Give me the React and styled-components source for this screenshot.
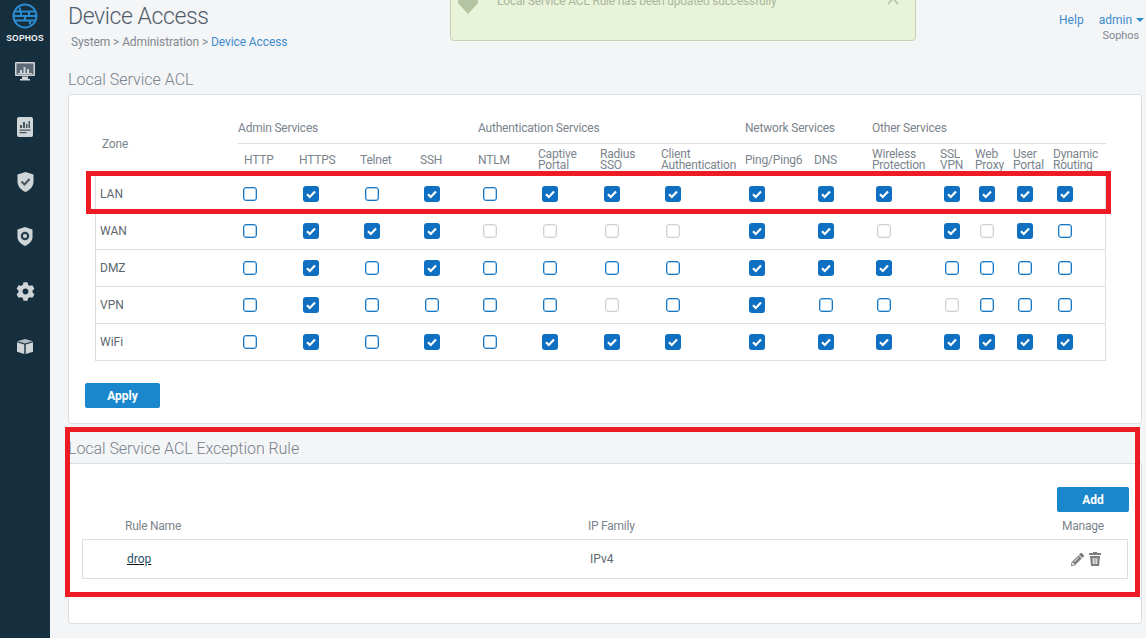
import styled, { createGlobalStyle } from "styled-components";
import { FaCog, FaPencilAlt } from "react-icons/fa";

const FONT = `Roboto, "Liberation Sans", sans-serif`;
const COLUMNS = "143px 61px 61px 60px 58px 60px 62px 61px 84px 69px 58px 68px 35px 38px 40px 53px";

const groups = [
    { name: "Admin Services", span: 4 },
    { name: "Authentication Services", span: 4 },
    { name: "Network Services", span: 2 },
    { name: "Other Services", span: 5 },
];

const services = [
    ["HTTP"], ["HTTPS"], ["Telnet"], ["SSH"], ["NTLM"],
    ["Captive", "Portal"], ["Radius", "SSO"], ["Client", "Authentication"],
    ["Ping/Ping6"], ["DNS"], ["Wireless", "Protection"],
    ["SSL", "VPN"], ["Web", "Proxy"], ["User", "Portal"], ["Dynamic", "Routing"],
];

// 1 = checked, 0 = empty, d = disabled
const zones = [
    { name: "LAN", values: "010101111111111" },
    { name: "WAN", values: "0111dddd11d1d10" },
    { name: "DMZ", values: "010100001110000" },
    { name: "VPN", values: "010000d0100d000" },
    { name: "WiFi", values: "010101111111111" },
];

export default function App() {
    return (
        <Page>
            <GlobalStyle />
            <Sidebar>
                <LogoMark />
                <LogoText>SOPHOS</LogoText>
                <NavIcon><MonitorIcon /></NavIcon>
                <NavIcon><ReportIcon /></NavIcon>
                <NavIcon><ShieldIcon /></NavIcon>
                <NavIcon><ShieldGearIcon /></NavIcon>
                <NavIcon><FaCog size={19} /></NavIcon>
                <NavIcon><BoxIcon /></NavIcon>
            </Sidebar>
            <Main>
                <Toast>
                    <ToastMark viewBox="0 0 20 14"><path d="M0 0h20v3L10 14 0 3z" /></ToastMark>
                    <ToastText>Local Service ACL Rule has been updated successfully</ToastText>
                    <ToastClose viewBox="0 0 12 9"><path d="M1-3l10 11M11-3L1 8" /></ToastClose>
                </Toast>
                <TopBar>
                    <div>
                        <PageTitle>Device Access</PageTitle>
                        <Crumbs>System &gt; Administration &gt; <CrumbLink>Device Access</CrumbLink></Crumbs>
                    </div>
                    <UserBox>
                        <UserLinks>
                            <TopLink>Help</TopLink>
                            <TopLink>admin <Caret /></TopLink>
                        </UserLinks>
                        <Company>Sophos</Company>
                    </UserBox>
                </TopBar>

                <SectionTitle>Local Service ACL</SectionTitle>
                <AclCard>
                    <AclTable>
                        <HeadRow>
                            <ZoneHead>Zone</ZoneHead>
                            {groups.map((g) => (
                                <GroupHead key={g.name} $span={g.span}>{g.name}</GroupHead>
                            ))}
                            {services.map((lines, i) => (
                                <ServiceHead key={lines[0]} $indent={i === 0}>
                                    {lines.map((l) => <span key={l}>{l}</span>)}
                                </ServiceHead>
                            ))}
                        </HeadRow>
                        {zones.map((zone) => (
                            <ZoneRow key={zone.name}>
                                <ZoneName>{zone.name}</ZoneName>
                                {zone.values.split("").map((v, i) => (
                                    <BoxCell key={i}><CheckBox value={v} /></BoxCell>
                                ))}
                            </ZoneRow>
                        ))}
                    </AclTable>
                    <PrimaryButton $width={75}>Apply</PrimaryButton>
                </AclCard>

                <ExceptionTitle>Local Service ACL Exception Rule</ExceptionTitle>
                <RuleCard>
                    <RuleActions>
                        <PrimaryButton $width={72}>Add</PrimaryButton>
                    </RuleActions>
                    <RuleHead>
                        <RuleHeadName>Rule Name</RuleHeadName>
                        <span>IP Family</span>
                        <span>Manage</span>
                    </RuleHead>
                    <RuleRow>
                        <RuleLink>drop</RuleLink>
                        <span>IPv4</span>
                        <RuleTools>
                            <FaPencilAlt size={13} />
                            <TrashIcon />
                        </RuleTools>
                    </RuleRow>
                </RuleCard>
            </Main>
            <Callout $x={86} $y={171} $w={1025} $h={43} />
            <Callout $x={65} $y={427} $w={1075} $h={170} />
        </Page>
    );
}

function CheckBox({ value }) {
    if (value === "1") {
        return (
            <Checked viewBox="0 0 16 16">
                <path d="M4 8.2l2.8 2.8L12 5.6" />
            </Checked>
        );
    }
    return <Unchecked $disabled={value === "d"} />;
}

function LogoMark() {
    return (
        <LogoSvg viewBox="0 0 26 26">
            <circle cx="13" cy="13" r="11.5" />
            <path d="M3 8.5h20M1.5 13h23M3 17.5h20M9 8.5V13M17 8.5V13M13 13v4.5M8 4.5v4M18 17.5v4" />
        </LogoSvg>
    );
}

function MonitorIcon() {
    return (
        <IconSvg $w={20} $h={19} viewBox="0 0 20 19">
            <rect width="20" height="14" rx="1" />
            <rect x="1.500" y="1.500" width="17" height="11" fill="#5b6a74" />
            <path d="M3 11h14v1H3zM5 8h2v3H5zM8.500 5h2v6h-2zM12 7h2v4h-2z" />
            <path d="M7 14.500h6V17h2v1.500H5V17h2z" />
        </IconSvg>
    );
}

function ReportIcon() {
    return (
        <IconSvg $w={16} $h={20} viewBox="0 0 16 20">
            <rect width="16" height="20" rx="2" />
            <path fill="#46565f" d="M3 8h2v3H3zM6 5h2v6H6zM9 7h1.500v4H9zM11.500 4H13v7h-1.500zM2.500 12.500h11v1.200h-11zM2.500 15h7v1.200h-7z" />
        </IconSvg>
    );
}

function ShieldIcon() {
    return (
        <IconSvg $w={17} $h={20} viewBox="0 0 17 20">
            <path d="M8.500 0l8 2.500v7c0 5-3.500 8.500-8 10.500-4.500-2-8-5.500-8-10.500v-7z" />
            <path d="M4.500 9.500l3 3 5-5.500" fill="none" stroke="#46565f" strokeWidth="2" />
        </IconSvg>
    );
}

function ShieldGearIcon() {
    return (
        <IconSvg $w={16} $h={19} viewBox="0 0 17 20">
            <path d="M8.500 0l8 2.500v8c0 4-3.500 7.500-8 9.500-4.500-2-8-5.500-8-9.500v-8z" />
            <circle cx="8.500" cy="9.500" r="4.500" fill="#24404f" />
            <circle cx="8.500" cy="9.500" r="2.200" />
        </IconSvg>
    );
}

function BoxIcon() {
    return (
        <IconSvg $w={16} $h={15} viewBox="0 0 16 15">
            <path d="M8 0l8 2.300L8 4.600 0 2.300z" opacity=".85" />
            <path d="M0 3.300l7.300 2.200V15L0 12.700zM16 3.300L8.700 5.500V15l7.300-2.300z" />
        </IconSvg>
    );
}

function TrashIcon() {
    return (
        <TrashSvg viewBox="0 0 12 14">
            <path d="M4 0h4v1h4v2H0V1h4z" />
            <path d="M1 4h10l-1 10H2z" />
            <path d="M4 6l.4 6M6 6v6M8 6l-.4 6" stroke="#fff" strokeWidth="1" fill="none" />
        </TrashSvg>
    );
}

const GlobalStyle = createGlobalStyle`
  html, body {
    margin: 0;
    height: 100%;
    background: #f4f5f7;
    font-family: ${FONT};
  }
  * { box-sizing: border-box; }
`;

const Page = styled.div`
  position: relative;
  display: flex;
  width: 1146px;
  height: 638px;
  overflow: hidden;
  background: #f4f5f7;
`;

const Sidebar = styled.nav`
  flex: 0 0 50px;
  display: flex;
  flex-direction: column;
  align-items: center;
  padding-top: 3px;
  background: #162f3e;
`;

const LogoSvg = styled.svg`
  width: 26px;
  height: 26px;
  fill: none;
  stroke: #2a8bd0;
  stroke-width: 2;
`;

const LogoText = styled.div`
  margin: 4px 0 0;
  font: bold 8.5px/11px "Liberation Sans", sans-serif;
  letter-spacing: 0.2px;
  color: #eef1f2;
`;

const NavIcon = styled.div`
  display: flex;
  align-items: center;
  justify-content: center;
  width: 50px;
  height: 55px;
  color: #d0d5d7;
`;

const IconSvg = styled.svg`
  width: ${(p) => p.$w}px;
  height: ${(p) => p.$h}px;
  fill: #d0d5d7;
`;

const Main = styled.main`
  position: relative;
  flex: 1;
  min-width: 0;
  padding: 0 4px 0 18px;
`;

const Toast = styled.div`
  position: absolute;
  top: -8px;
  left: 400px;
  display: flex;
  align-items: flex-start;
  width: 466px;
  height: 49px;
  padding: 0 16px 0 7px;
  border: 1px solid #c4d3b0;
  border-radius: 4px;
  background: #e9f3d9;
`;

const ToastMark = styled.svg`
  flex: none;
  width: 20px;
  height: 14px;
  margin-top: 7px;
  fill: #b4c3a2;
`;

const ToastText = styled.span`
  flex: 1;
  margin-left: 19px;
  font-size: 12px;
  line-height: 16px;
  letter-spacing: -0.2px;
  color: #aab79c;
`;

const ToastClose = styled.svg`
  flex: none;
  width: 12px;
  height: 15px;
  fill: none;
  stroke: #b4c0a6;
  stroke-width: 1.500;
`;

const TopBar = styled.header`
  display: flex;
  justify-content: space-between;
  height: 66px;
`;

const PageTitle = styled.h1`
  margin: 0;
  padding-top: 1px;
  font-size: 23px;
  font-weight: 300;
  line-height: 32px;
  letter-spacing: -0.4px;
  color: #4f5c69;
`;

const Crumbs = styled.div`
  margin-top: 1px;
  padding-left: 3px;
  font-size: 12px;
  line-height: 16px;
  letter-spacing: -0.1px;
  color: #808890;
`;

const CrumbLink = styled.span`
  color: #3f8ccb;
`;

const UserBox = styled.div`
  margin-right: -2px;
  padding-top: 12px;
  text-align: right;
  font-size: 12px;
  line-height: 16px;
`;

const UserLinks = styled.div`
  display: flex;
  gap: 15px;
`;

const TopLink = styled.span`
  color: #3f8ccb;
`;

const Caret = styled.i`
  display: inline-block;
  width: 0;
  height: 0;
  margin-left: 1px;
  vertical-align: 2px;
  border: 4px solid transparent;
  border-bottom: 0;
  border-top-color: #2a8bd0;
`;

const Company = styled.div`
  padding-right: 5px;
  font-size: 11px;
  letter-spacing: -0.1px;
  color: #808890;
`;

const SectionTitle = styled.h2`
  margin: 0;
  height: 28px;
  font-size: 16px;
  font-weight: 300;
  line-height: 27px;
  color: #78828c;
`;

const AclCard = styled.section`
  height: 330px;
  padding: 18px 0 0 16px;
  border: 1px solid #dcdfe1;
  border-radius: 3px;
  background: #fff;
`;

const AclTable = styled.div`
  width: 1011px;
  margin: 0 0 22px 10px;
`;

const HeadRow = styled.div`
  display: grid;
  grid-template-columns: ${COLUMNS};
  grid-template-rows: 31px 32px;
  font-size: 12px;
  letter-spacing: -0.2px;
  color: #7c848c;
`;

const ZoneHead = styled.div`
  grid-row: 1 / 3;
  align-self: center;
  padding: 0 0 2px 7px;
`;

const GroupHead = styled.div`
  grid-column: span ${(p) => p.$span};
  padding-top: 8px;
  border-bottom: 1px solid #dcdfe1;
`;

const ServiceHead = styled.div`
  grid-row: 2;
  display: flex;
  flex-direction: column;
  justify-content: center;
  padding-left: ${(p) => (p.$indent ? "6px" : "0")};
  font-size: 12px;
  line-height: 11px;
  white-space: nowrap;
`;

const ZoneRow = styled.div`
  display: grid;
  grid-template-columns: ${COLUMNS};
  align-items: center;
  height: 37px;
  border: 1px solid #dcdfe1;
  border-top: 0;
  &:first-of-type { border-top: 1px solid #dcdfe1; }
`;

const ZoneName = styled.div`
  padding-left: 4px;
  font-size: 12px;
  color: #5d6770;
`;

const BoxCell = styled.div`
  display: flex;
  justify-content: center;
  width: 22px;
`;

const Checked = styled.svg`
  display: block;
  flex: none;
  width: 16px;
  height: 16px;
  border-radius: 3px;
  background: #0f6fc0;
  fill: none;
  stroke: #fff;
  stroke-width: 2.200;
`;

const Unchecked = styled.span`
  display: block;
  flex: none;
  width: 14px;
  height: 14px;
  border: 1px solid ${(p) => (p.$disabled ? "#cfd3d6" : "#1a78c2")};
  border-radius: 3px;
  background: #fff;
  box-shadow: inset 0 0 0 0.5px ${(p) => (p.$disabled ? "#dfe2e4" : "#5da3d8")};
`;

const PrimaryButton = styled.button`
  display: block;
  width: ${(p) => p.$width}px;
  height: 25px;
  padding: 0;
  border: 0;
  border-radius: 2px;
  background: #1a87cd;
  font: 700 12px ${FONT};
  color: #fff;
`;

const ExceptionTitle = styled.h2`
  margin: 8px 0 0;
  height: 31px;
  font-size: 16px;
  font-weight: 300;
  line-height: 34px;
  letter-spacing: -0.05px;
  color: #78828c;
`;

const RuleCard = styled.section`
  height: 161px;
  padding: 23px 13px 0;
  border: 1px solid #dcdfe1;
  border-radius: 0 0 3px 3px;
  background: #fff;
`;

const RuleActions = styled.div`
  display: flex;
  justify-content: flex-end;
  margin-right: -1px;
`;

const RuleHead = styled.div`
  display: grid;
  grid-template-columns: 506px 1fr 66px;
  align-items: center;
  height: 27px;
  font-size: 12px;
  letter-spacing: -0.25px;
  color: #7c848c;
`;

const RuleHeadName = styled.span`
  padding-left: 43px;
`;

const RuleRow = styled.div`
  display: grid;
  grid-template-columns: 507px 1fr 57px;
  align-items: center;
  height: 40px;
  border: 1px solid #dcdfe1;
  font-size: 12px;
  color: #5d6770;
`;

const RuleLink = styled.a`
  margin-left: 44px;
  justify-self: start;
  color: #2b4f6e;
  text-decoration: underline;
  text-decoration-color: #111;
`;

const RuleTools = styled.div`
  display: flex;
  align-items: center;
  gap: 5px;
  margin-left: 1px;
  color: #7d7d7d;
`;

const TrashSvg = styled.svg`
  width: 12px;
  height: 14px;
  fill: #7d7d7d;
`;

const Callout = styled.div`
  position: absolute;
  left: ${(p) => p.$x}px;
  top: ${(p) => p.$y}px;
  width: ${(p) => p.$w}px;
  height: ${(p) => p.$h}px;
  border: 5px solid #ed1c24;
  pointer-events: none;
`;
